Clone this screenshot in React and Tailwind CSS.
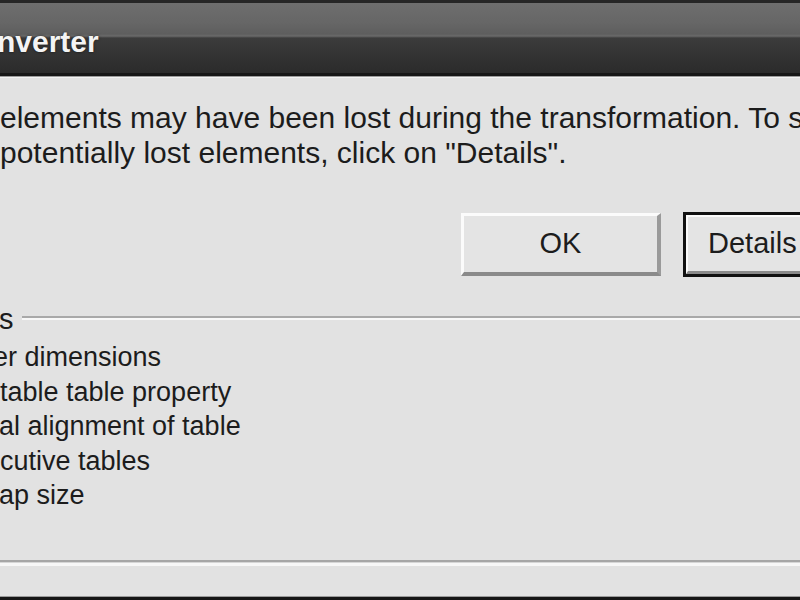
export default function App() {
  const items = [
    { t: "er dimensions", ml: "-ml-[7px]" },
    { t: "table table property", ml: "ml-0" },
    { t: "al alignment of table", ml: "-ml-[1px]" },
    { t: "cutive tables", ml: "ml-0" },
    { t: "ap size", ml: "-ml-[1px]" },
  ];
  return (
    <div className="w-[800px] h-[600px] overflow-hidden bg-[#e2e2e2] flex flex-col font-['Liberation_Sans',Arial,sans-serif] text-[#1c1c1c]">
      {/* title bar */}
      <div className="h-[73px] shrink-0 border-t-[3px] border-[#262626] bg-[linear-gradient(to_bottom,#6e6e6e_0px,#666666_20px,#5e5e5e_31px,#6a6a6a_33px,#3c3c3c_35px,#343434_50px,#2b2b2b_70px)] pt-[24px] overflow-hidden">
        <div className="-ml-[3px] whitespace-nowrap text-[30px] leading-[30px] font-bold text-[#f4f4f4] [text-shadow:0_0_3px_rgba(0,0,0,0.6)]">
          nverter
        </div>
      </div>
      <div className="h-[3px] shrink-0 bg-[#161616]"></div>
      <div className="h-[1px] shrink-0 bg-[#9c9c9c]"></div>
      <div className="h-[1px] shrink-0 bg-[#f2f2f2]"></div>

      {/* body */}
      <div className="flex-1 flex flex-col pt-[22px] overflow-hidden">
        <div className="text-[30px] leading-[35px] whitespace-nowrap">
          <div>elements may have been lost during the transformation. To see</div>
          <div>potentially lost elements, click on "Details".</div>
        </div>

        <div className="mt-[43px] flex gap-[22px] pl-[461px]">
          <div className="w-[200px] h-[63px] shrink-0 border-t-[3px] border-l-[3px] border-b-[4px] border-r-[4px] border-t-[#fbfbfb] border-l-[#fbfbfb] border-b-[#8a8a8a] border-r-[#9a9a9a] bg-[#e4e4e4] flex items-center justify-center text-[29px]">
            OK
          </div>
          <div className="w-[200px] h-[65px] -mt-[1px] shrink-0 border-[3px] border-[#111111] bg-[#e4e4e4] flex">
            <div className="flex-1 border-t-[2px] border-l-[2px] border-b-[3px] border-t-[#fbfbfb] border-l-[#fbfbfb] border-b-[#8a8a8a] flex items-center pl-[20px] text-[29px]">
              Details
            </div>
          </div>
        </div>

        <div className="mt-[25px] flex items-center text-[29px] leading-[35px]">
          <span className="-ml-[1px] shrink-0">s</span>
          <div className="ml-[8px] flex-1 flex flex-col -mt-[3px]">
            <div className="h-[2px] bg-[#a9a9a9]"></div>
            <div className="h-[2px] bg-[#f8f8f8]"></div>
          </div>
        </div>

        <div className="mt-[3px] flex flex-col text-[27px] leading-[34.5px] whitespace-nowrap">
          {items.map((it) => (
            <div key={it.t} className={it.ml}>{it.t}</div>
          ))}
        </div>

        <div className="mt-[47px] flex flex-col">
          <div className="h-[2px] bg-[#a6a6a6]"></div>
          <div className="h-[1px] bg-[#d6d6d6]"></div>
          <div className="h-[3px] bg-[#f7f7f7]"></div>
        </div>
        <div className="flex-1"></div>
      </div>
      <div className="h-[1px] shrink-0 bg-[#9a9a9a]"></div>
      <div className="h-[3px] shrink-0 bg-[#161616]"></div>
    </div>
  );
}
